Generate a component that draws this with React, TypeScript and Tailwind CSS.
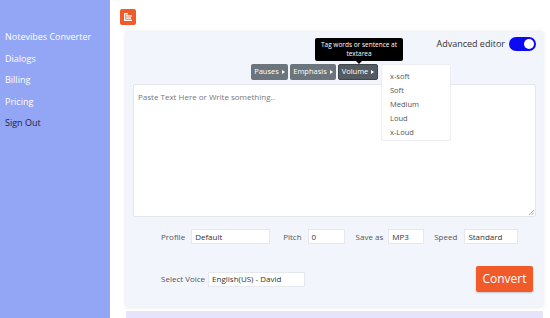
import React from "react";

const navItems = ["Notevibes Converter", "Dialogs", "Billing", "Pricing"];
const volumes = ["x-soft", "Soft", "Medium", "Loud", "x-Loud"];

function Caret() {
  return <span className="ml-[3px] inline-block border-y-[2px] border-l-[3px] border-y-transparent border-l-white" />;
}

function Field({ label, value, width, gap }: { label: string; value: string; width: string; gap: string }) {
  return (
    <div className="flex items-center">
      <span className={`text-[8px] text-[#555] ${gap}`}>{label}</span>
      <div className={`h-[15px] ${width} bg-white border border-[#e6e8ef] text-[8px] text-[#333] pl-[3px] flex items-center`}>
        {value}
      </div>
    </div>
  );
}

export default function App() {
  return (
    <div className="flex h-[318px] w-[550px] overflow-hidden bg-white" style={{ fontFamily: '"Open Sans", sans-serif' }}>
      {/* Sidebar */}
      <aside className="w-[110px] shrink-0 bg-[#93a5f5] pt-[31px] pl-[5px]">
        {navItems.map((n) => (
          <div key={n} className="h-[21.5px] text-[9px] text-white leading-[12px]">
            {n}
          </div>
        ))}
        <div className="text-[9px] text-[#1c1f3a] leading-[12px]">Sign Out</div>
      </aside>

      {/* Main */}
      <main className="flex-1 pt-[9px]">
        <button className="ml-[10px] w-[16px] h-[16px] bg-[#f15a29] rounded-[2px] flex items-center justify-center">
          <svg width="8" height="8" viewBox="0 0 8 8" fill="white">
            <rect x="0" y="0" width="4" height="1.4" />
            <rect x="2" y="2.2" width="6" height="1.4" />
            <rect x="2" y="4.4" width="5" height="1.4" />
            <rect x="0" y="6.6" width="8" height="1.4" />
            <rect x="0" y="0" width="1.4" height="8" />
          </svg>
        </button>

        <div className="relative ml-[16px] mt-[7px] w-[417px] h-[275px] bg-[#f3f5fd] shadow-[0_0_4px_rgba(0,0,0,0.12)] px-[7px] pt-[5px]">
          <div className="flex justify-end items-center h-[14px]">
            <span className="text-[9px] text-[#333] mr-[4px]">Advanced editor</span>
            <div className="w-[27px] h-[14px] rounded-full bg-[#0a0af5] flex items-center justify-end pr-[2px]">
              <div className="w-[10px] h-[10px] rounded-full bg-white" />
            </div>
          </div>

          <div className="mt-[13px] ml-[118px] flex gap-[2px] h-[16px]">
            <button className="h-[16px] w-[37px] bg-[#6c757d] text-white text-[7.5px] rounded-[2px] flex items-center justify-center">
              Pauses<Caret />
            </button>
            <button className="h-[16px] w-[46px] bg-[#6c757d] text-white text-[7.5px] rounded-[2px] flex items-center justify-center">
              Emphasis<Caret />
            </button>
            <button className="h-[16px] w-[40px] bg-[#545b62] border border-[#41464b] text-white text-[7.5px] rounded-[2px] flex items-center justify-center">
              Volume<Caret />
            </button>
          </div>

          <div className="mt-[4px] h-[133px] bg-white border border-[#e3e6ee] rounded-[2px] relative">
            <span className="absolute left-[4px] top-[6px] text-[8px] text-[#777]">Paste Text Here or Write something..</span>
            <svg className="absolute right-[1px] bottom-[1px]" width="5" height="5" viewBox="0 0 5 5" stroke="#999" strokeWidth="0.8">
              <line x1="0" y1="5" x2="5" y2="0" />
              <line x1="2.5" y1="5" x2="5" y2="2.5" />
            </svg>
          </div>

          <div className="mt-[12px] ml-[28px] flex items-center">
            <Field label="Profile" value="Default" width="w-[79px]" gap="mr-[6px]" />
            <div className="w-[13px]" />
            <Field label="Pitch" value="0" width="w-[37px]" gap="mr-[6px]" />
            <div className="w-[11px]" />
            <Field label="Save as" value="MP3" width="w-[36px]" gap="mr-[5px]" />
            <div className="w-[10px]" />
            <Field label="Speed" value="Standard" width="w-[54px]" gap="mr-[7px]" />
          </div>

          <div className="mt-[22px] ml-[28px] flex items-center justify-between h-[26px] pr-[3px]">
            <Field label="Select Voice" value="English(US) - David" width="w-[97px]" gap="mr-[3px]" />
            <button className="w-[57px] h-[26px] bg-[#f15a29] rounded-[2px] text-white text-[12px] flex items-center justify-center shadow-[0_1px_2px_rgba(0,0,0,0.2)]">
              Convert
            </button>
          </div>

          {/* Tooltip */}
          <div className="absolute left-[189px] top-[6px] w-[88px] h-[23px] bg-black rounded-[2px] text-white text-[6.5px] leading-[9px] text-center pt-[2px]">
            Tag words or sentence at
            <br />
            textarea
            <span className="absolute left-1/2 -translate-x-1/2 bottom-[-3px] border-x-[3px] border-t-[3px] border-x-transparent border-t-black" />
          </div>

          {/* Dropdown */}
          <div className="absolute left-[255px] top-[32px] w-[70px] h-[77px] bg-white border border-[#eceef3] rounded-[2px] pt-[4px] pl-[8px]">
            {volumes.map((v) => (
              <div key={v} className="h-[14px] text-[7.5px] text-[#555] leading-[14px]">
                {v}
              </div>
            ))}
          </div>
        </div>

        <div className="ml-[16px] mt-[4px] w-[417px] h-[10px] bg-[#e4e4fa]" />
      </main>
    </div>
  );
}
